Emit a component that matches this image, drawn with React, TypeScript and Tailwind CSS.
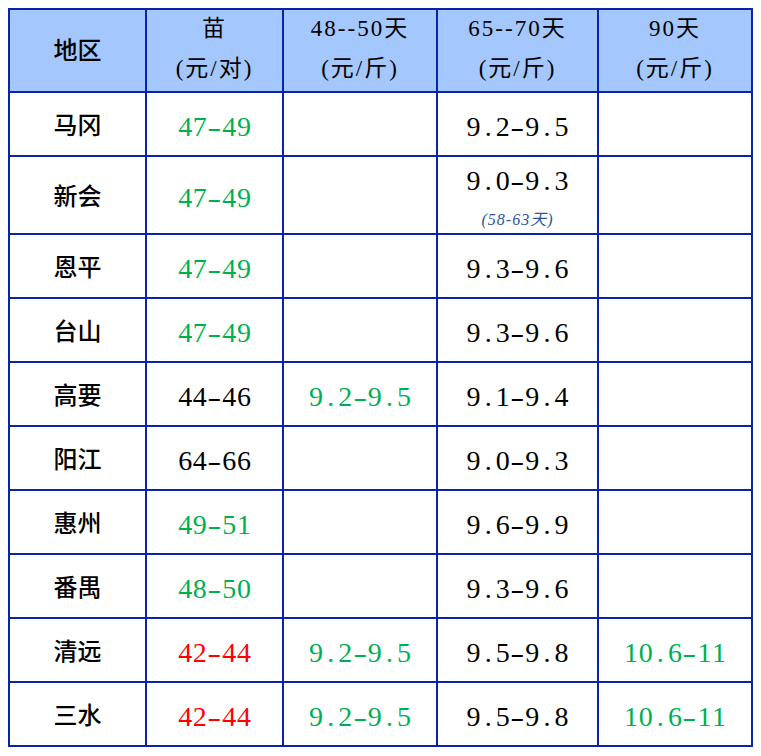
import React from "react";

type Cell = { v?: string; c?: "g" | "r" | "k"; note?: string };
type Row = { name: string; cells: Cell[] };

const rows: Row[] = [
  { name: "马冈", cells: [{ v: "47-49", c: "g" }, {}, { v: "9.2-9.5" }, {}] },
  { name: "新会", cells: [{ v: "47-49", c: "g" }, {}, { v: "9.0-9.3", note: "(58-63天)" }, {}] },
  { name: "恩平", cells: [{ v: "47-49", c: "g" }, {}, { v: "9.3-9.6" }, {}] },
  { name: "台山", cells: [{ v: "47-49", c: "g" }, {}, { v: "9.3-9.6" }, {}] },
  { name: "高要", cells: [{ v: "44-46" }, { v: "9.2-9.5", c: "g" }, { v: "9.1-9.4" }, {}] },
  { name: "阳江", cells: [{ v: "64-66" }, {}, { v: "9.0-9.3" }, {}] },
  { name: "惠州", cells: [{ v: "49-51", c: "g" }, {}, { v: "9.6-9.9" }, {}] },
  { name: "番禺", cells: [{ v: "48-50", c: "g" }, {}, { v: "9.3-9.6" }, {}] },
  { name: "清远", cells: [{ v: "42-44", c: "r" }, { v: "9.2-9.5", c: "g" }, { v: "9.5-9.8" }, { v: "10.6-11", c: "g" }] },
  { name: "三水", cells: [{ v: "42-44", c: "r" }, { v: "9.2-9.5", c: "g" }, { v: "9.5-9.8" }, { v: "10.6-11", c: "g" }] },
];

const color = (c?: Cell["c"]) =>
  c === "g" ? "text-[#00b050]" : c === "r" ? "text-[#ff0000]" : "text-black";

// fixed-pitch digits, each glyph gets its own cell like the source sheet
function Num({ text }: { text: string }) {
  return (
    <span className="inline-flex">
      {text.split("").map((ch, i) => (
        <span key={i} className={`inline-block w-[14.7px] text-center ${ch === "-" ? "scale-x-150" : ""}`}>
          {ch}
        </span>
      ))}
    </span>
  );
}

const headers = [
  ["苗", "(元/对)"],
  ["48--50天", "(元/斤)"],
  ["65--70天", "(元/斤)"],
  ["90天", "(元/斤)"],
];

export default function App() {
  return (
    <div className="min-h-screen bg-white pl-2 pt-2 font-['Liberation_Serif','Noto_Sans_CJK_SC',serif]">
      <table className="table-fixed border-collapse border-2 border-[#0a23a8]">
        <colgroup>
          <col className="w-[137px]" />
          <col className="w-[137px]" />
          <col className="w-[154px]" />
          <col className="w-[161px]" />
          <col className="w-[154px]" />
        </colgroup>
        <thead>
          <tr className="h-[83px] bg-[#a4c7fd]">
            <th className="border-2 border-[#0a23a8] text-[24px] font-medium text-black">地区</th>
            {headers.map(([a, b]) => (
              <th
                key={a}
                className="border-2 border-[#0a23a8] text-[23px] font-normal tracking-[2px] text-black"
              >
                <div className="leading-[36px]">{a}</div>
                <div className="leading-[44px]">{b}</div>
              </th>
            ))}
          </tr>
        </thead>
        <tbody>
          {rows.map((r) => (
            <tr key={r.name} className={r.cells[2].note ? "h-[78px]" : "h-[64px]"}>
              <td className="border-2 border-[#0a23a8] pt-[3px] text-center text-[24px] font-medium text-black">
                {r.name}
              </td>
              {r.cells.map((c, i) => (
                <td
                  key={i}
                  className={`border-2 border-[#0a23a8] text-center text-[28px] leading-none ${color(c.c)}`}
                >
                  {c.v && (
                    <div className={c.note ? "pt-[7px]" : "pt-[5px]"}>
                      <Num text={c.v} />
                    </div>
                  )}
                  {c.note && (
                    <div className="mt-[15px] text-[16px] leading-[20px] italic tracking-[1px] text-[#2e54a0]">
                      {c.note}
                    </div>
                  )}
                </td>
              ))}
            </tr>
          ))}
        </tbody>
      </table>
    </div>
  );
}
